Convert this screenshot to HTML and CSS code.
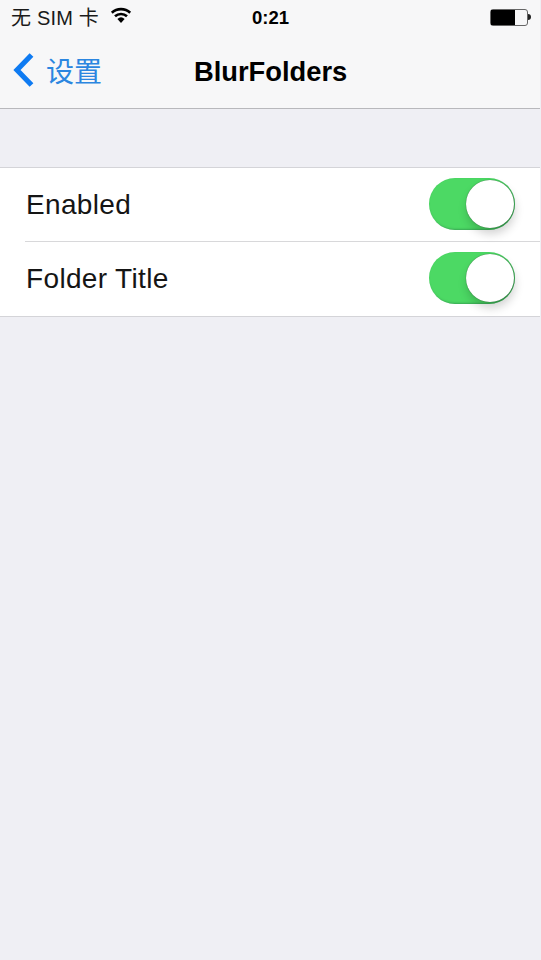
FILE: index.html
```html
<!DOCTYPE html>
<html lang="zh">
<head>
<meta charset="utf-8">
<title>BlurFolders</title>
<link rel="stylesheet" href="styles.css">
</head>
<body>
<div class="screen">
  <header class="top">
    <div class="status">
      <div class="status-left">
        <span class="carrier">无 SIM 卡</span>
        <svg class="wifi" width="22" height="17" viewBox="0 0 22 16"><path d="M11 15.500 7.400 11.400a5.400 5.400 0 0 1 7.200 0Z" fill="#000"/><path d="M5 8.800a8.800 8.800 0 0 1 12 0" fill="none" stroke="#000" stroke-width="2.600"/><path d="M1.800 5.200a13.500 13.500 0 0 1 18.400 0" fill="none" stroke="#000" stroke-width="2.600"/></svg>
      </div>
      <span class="time">0:21</span>
      <div class="status-right">
        <div class="battery"><div class="battery-fill"></div></div>
        <div class="battery-cap"></div>
      </div>
    </div>
    <nav class="nav">
      <div class="back">
        <svg class="chevron" width="22" height="36" viewBox="0 0 22 36"><path d="M18.500 3 4 18l14.500 15" fill="none" stroke="#0f7bf2" stroke-width="5.200"/></svg>
        <span class="back-label">设置</span>
      </div>
      <h1 class="title">BlurFolders</h1>
    </nav>
  </header>
  <section class="list">
    <div class="row">
      <span class="label">Enabled</span>
      <div class="toggle"><div class="knob"></div></div>
    </div>
    <div class="row">
      <span class="label">Folder Title</span>
      <div class="toggle"><div class="knob"></div></div>
    </div>
  </section>
</div>
</body>
</html>
```
FILE: styles.css
```css
* { box-sizing: border-box; }
html, body { margin: 0; height: 100%; }
body { background: #efeff4; font-family: "Liberation Sans", "Noto Sans CJK SC", sans-serif; color: #000; overflow: hidden; }
.screen { width: 540px; height: 960px; background: #efeff4; }
.top { height: 109px; background: #f7f7f8; border-bottom: 1px solid #b8b8bc; display: flex; flex-direction: column; }
.status { height: 34px; display: flex; align-items: center; justify-content: space-between; padding: 0 9px 0 11px; position: relative; }
.status-left { display: flex; align-items: center; gap: 11px; }
.carrier { font-size: 20px; letter-spacing: .2px; color: #1a1a1a; margin-top: -2px; }
.wifi { margin-top: -3px; }
.time { position: absolute; left: 252px; top: 7px; font-size: 18.500px; font-weight: 700; }
.status-right { display: flex; align-items: center; }
.battery { width: 38px; height: 17px; border: 1.500px solid #666; border-radius: 3px; }
.battery-fill { width: 24px; height: 100%; background: #000; }
.battery-cap { width: 3px; height: 6px; background: #222; border-radius: 0 3px 3px 0; }
.nav { flex: 1; display: flex; align-items: center; position: relative; padding: 0 0 2px 13px; }
.back { display: flex; align-items: center; gap: 11px; }
.back-label { font-size: 28px; color: #2b86e0; }
.title { position: absolute; left: 194px; top: 21px; margin: 0; font-size: 27.300px; line-height: 34px; font-weight: 700; }
.list { margin-top: 58px; background: #fff; border-top: 1px solid #d4d4d8; border-bottom: 1px solid #d4d4d8; }
.row { height: 73px; margin-left: 25px; display: flex; align-items: center; justify-content: space-between; padding: 0 25px 0 1px; }
.row + .row { height: 75px; border-top: 1px solid #d8d8da; }
.label { font-size: 28px; letter-spacing: .35px; color: #151515; }
.toggle { width: 86px; height: 52px; margin-bottom: 2px; border-radius: 26px; background: #4cd964; padding: 2px 1px 2px 2px; display: flex; justify-content: flex-end; box-shadow: inset -1px -1px 2px rgba(40,120,70,.5); }
.knob { width: 48px; height: 48px; border-radius: 50%; background: #fff; box-shadow: 0 0 1px rgba(0,0,0,.6), 1px 6px 10px rgba(0,0,0,.18); }
```
